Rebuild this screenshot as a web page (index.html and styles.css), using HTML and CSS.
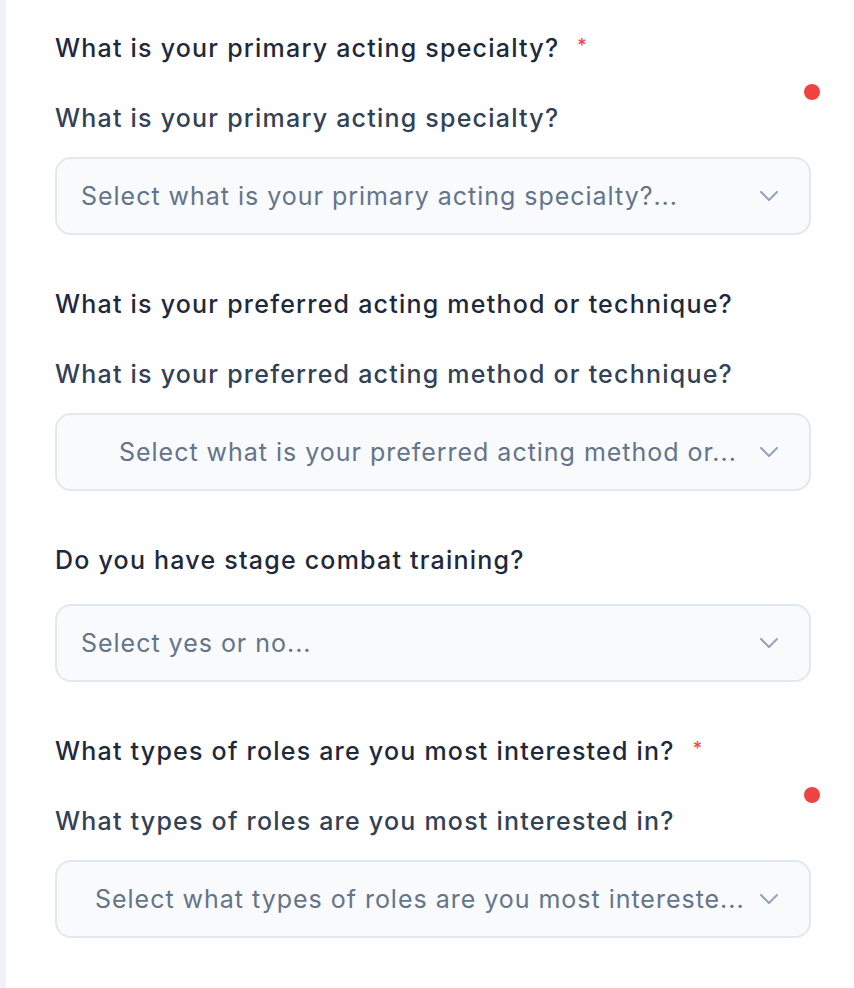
FILE: index.html
```html
<!DOCTYPE html>
<html lang="en">
<head>
<meta charset="utf-8">
<title>Acting profile</title>
<link rel="stylesheet" href="styles.css">
</head>
<body>
<div class="page">
  <section class="group">
    <div class="q-title">What is your primary acting specialty?<span class="req">*</span></div>
    <span class="dot"></span>
    <div class="sub-label">What is your primary acting specialty?</div>
    <div class="select">
      <span class="placeholder">Select what is your primary acting specialty?...</span>
      <svg class="chev" viewBox="0 0 20 12" width="20" height="12"><path d="M2 2 L10 10 L18 2"/></svg>
    </div>
  </section>

  <section class="group">
    <div class="q-title">What is your preferred acting method or technique?</div>
    <div class="sub-label">What is your preferred acting method or technique?</div>
    <div class="select select--inset-lg">
      <span class="placeholder">Select what is your preferred acting method or...</span>
      <svg class="chev" viewBox="0 0 20 12" width="20" height="12"><path d="M2 2 L10 10 L18 2"/></svg>
    </div>
  </section>

  <section class="group">
    <div class="q-title q-title--direct">Do you have stage combat training?</div>
    <div class="select">
      <span class="placeholder">Select yes or no...</span>
      <svg class="chev" viewBox="0 0 20 12" width="20" height="12"><path d="M2 2 L10 10 L18 2"/></svg>
    </div>
  </section>

  <section class="group">
    <div class="q-title">What types of roles are you most interested in?<span class="req">*</span></div>
    <span class="dot"></span>
    <div class="sub-label">What types of roles are you most interested in?</div>
    <div class="select select--inset-md">
      <span class="placeholder">Select what types of roles are you most intereste...</span>
      <svg class="chev" viewBox="0 0 20 12" width="20" height="12"><path d="M2 2 L10 10 L18 2"/></svg>
    </div>
  </section>
</div>
</body>
</html>
```

FILE: styles.css
```css
html, body {
  margin: 0;
  padding: 0;
  background: #ffffff;
}

body {
  font-family: Inter, "Noto Sans", "Liberation Sans", sans-serif;
  font-size: 25px;
  -webkit-font-smoothing: antialiased;
}

.page {
  border-left: 6px solid #f0f2f8;
  min-height: 988px;
  box-sizing: border-box;
  padding: 32px 43px 0 49px;
}

.group {
  position: relative;
  margin-bottom: 53px;
}

.q-title {
  height: 32px;
  line-height: 32px;
  font-weight: 500;
  letter-spacing: 1.22px;
  color: #1e293b;
  margin-bottom: 38px;
  white-space: nowrap;
}

.q-title--direct {
  margin-bottom: 28px;
}

.req {
  display: inline-block;
  color: #ef4444;
  font-size: 18px;
  line-height: 0;
  margin-left: 18px;
  vertical-align: 5px;
}

.dot {
  position: absolute;
  top: 52px;
  right: -9px;
  width: 16px;
  height: 16px;
  border-radius: 50%;
  background: #ef4444;
}

.sub-label {
  height: 32px;
  line-height: 32px;
  font-weight: 500;
  letter-spacing: 1.22px;
  color: #334155;
  margin-bottom: 23px;
  white-space: nowrap;
}

.select {
  height: 78px;
  box-sizing: border-box;
  border: 2px solid #e2e8f0;
  border-radius: 16px;
  background: #f8fafc;
  display: flex;
  align-items: center;
  padding: 0 30px 0 24px;
}

.select--inset-lg {
  padding-left: 62px;
}

.select--inset-md {
  padding-left: 38px;
}

.placeholder {
  flex: 1;
  color: #64748b;
  letter-spacing: 0.98px;
  white-space: nowrap;
  overflow: hidden;
}

.chev {
  flex: none;
  fill: none;
  stroke: #94a3b8;
  stroke-width: 2;
  stroke-linecap: round;
  stroke-linejoin: round;
}
```
